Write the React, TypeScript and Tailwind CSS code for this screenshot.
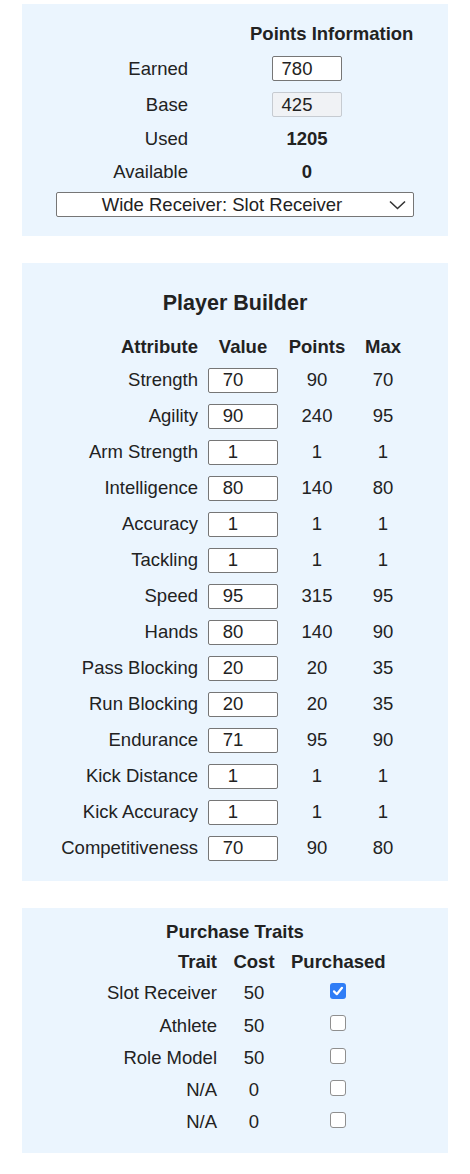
import React from "react";

const attributes = [
  { name: "Strength", value: "70", points: 90, max: 70 },
  { name: "Agility", value: "90", points: 240, max: 95 },
  { name: "Arm Strength", value: "1", points: 1, max: 1 },
  { name: "Intelligence", value: "80", points: 140, max: 80 },
  { name: "Accuracy", value: "1", points: 1, max: 1 },
  { name: "Tackling", value: "1", points: 1, max: 1 },
  { name: "Speed", value: "95", points: 315, max: 95 },
  { name: "Hands", value: "80", points: 140, max: 90 },
  { name: "Pass Blocking", value: "20", points: 20, max: 35 },
  { name: "Run Blocking", value: "20", points: 20, max: 35 },
  { name: "Endurance", value: "71", points: 95, max: 90 },
  { name: "Kick Distance", value: "1", points: 1, max: 1 },
  { name: "Kick Accuracy", value: "1", points: 1, max: 1 },
  { name: "Competitiveness", value: "70", points: 90, max: 80 },
];

const traits = [
  { name: "Slot Receiver", cost: 50, purchased: true },
  { name: "Athlete", cost: 50, purchased: false },
  { name: "Role Model", cost: 50, purchased: false },
  { name: "N/A", cost: 0, purchased: false },
  { name: "N/A", cost: 0, purchased: false },
];

function Checkbox({ checked }: { checked: boolean }) {
  if (checked) {
    return (
      <span className="mb-[4px] flex h-[16px] w-[16px] items-center justify-center rounded-[3px] bg-[#2f7df6]">
        <svg width="12" height="12" viewBox="0 0 12 12" fill="none">
          <path d="M2 6.4 L4.8 9.2 L10 2.8" stroke="#fff" strokeWidth="2.2" strokeLinecap="round" strokeLinejoin="round" />
        </svg>
      </span>
    );
  }
  return <span className="mb-[4px] block h-[16px] w-[16px] rounded-[3px] border-[1.5px] border-[#8f8f8f] bg-white" />;
}

export default function App() {
  return (
    <div className="min-h-[1174px] bg-white px-[22px] pt-[4px] font-['Liberation_Sans',Arial,sans-serif] text-[18.5px] text-[#222]">
      {/* points information */}
      <section className="bg-[#ebf5fe] pt-[18px] pb-[19px]">
        <div className="flex h-[24px] items-center pl-[228px] font-bold">Points Information</div>
        <div className="mt-[10px] flex h-[25px] items-center">
          <div className="w-[166px] text-right">Earned</div>
          <input
            readOnly
            value="780"
            className="ml-[84px] h-[25px] w-[70px] rounded-[2px] border border-[#767676] bg-white pl-[2px] pr-[22px] text-center text-[18.5px] text-[#222] outline-none"
          />
        </div>
        <div className="mt-[11px] flex h-[25px] items-center">
          <div className="w-[166px] text-right">Base</div>
          <input
            readOnly
            disabled
            value="425"
            className="ml-[84px] h-[25px] w-[70px] rounded-[2px] border border-[#c6cbd1] bg-[#f0f2f5] pl-[2px] pr-[22px] text-center text-[18.5px] text-[#222] outline-none"
          />
        </div>
        <div className="mt-[9px] flex h-[25px] items-center">
          <div className="w-[166px] text-right">Used</div>
          <div className="ml-[84px] w-[70px] text-center font-bold">1205</div>
        </div>
        <div className="mt-[8px] flex h-[25px] items-center">
          <div className="w-[166px] text-right">Available</div>
          <div className="ml-[84px] w-[70px] text-center font-bold">0</div>
        </div>
        <div className="mt-[8px] ml-[34px] flex h-[25px] w-[358px] items-center rounded-[2px] border border-[#767676] bg-white">
          <span className="flex-1 text-center">Wide Receiver: Slot Receiver</span>
          <svg className="ml-[2px] mr-[7px]" width="17" height="10" viewBox="0 0 17 10" fill="none">
            <path d="M1 1.5 L8.5 8.5 L16 1.5" stroke="#333" strokeWidth="1.6" />
          </svg>
        </div>
      </section>

      {/* player builder */}
      <section className="mt-[27px] bg-[#ebf5fe] pt-[25px] pb-[15px]">
        <h2 className="flex h-[30px] items-center justify-center text-[21.5px] font-bold">Player Builder</h2>
        <div className="mt-[14px] flex h-[30px] items-center font-bold">
          <div className="w-[176px] text-right">Attribute</div>
          <div className="ml-[10px] w-[70px] text-center">Value</div>
          <div className="w-[78px] text-center">Points</div>
          <div className="w-[54px] text-center">Max</div>
        </div>
        {attributes.map((a) => (
          <div key={a.name} className="flex h-[36px] items-center">
            <div className="w-[176px] text-right">{a.name}</div>
            <input
              readOnly
              value={a.value}
              className="ml-[10px] h-[25px] w-[70px] rounded-[2px] border border-[#767676] bg-white pl-[2px] pr-[22px] text-center text-[18.5px] text-[#222] outline-none"
            />
            <div className="w-[78px] text-center">{a.points}</div>
            <div className="w-[54px] text-center">{a.max}</div>
          </div>
        ))}
      </section>

      {/* purchase traits */}
      <section className="mt-[27px] bg-[#ebf5fe] pt-[12px] pb-[15px]">
        <h3 className="flex h-[24px] items-center justify-center font-bold">Purchase Traits</h3>
        <div className="mt-[2px] flex h-[31px] items-center font-bold">
          <div className="w-[195px] text-right">Trait</div>
          <div className="w-[74px] text-center">Cost</div>
          <div className="w-[94px] text-center">Purchased</div>
        </div>
        {traits.map((t, i) => (
          <div key={i} className="flex h-[32.25px] items-center">
            <div className="w-[195px] text-right">{t.name}</div>
            <div className="w-[74px] text-center">{t.cost}</div>
            <div className="flex w-[94px] justify-center">
              <Checkbox checked={t.purchased} />
            </div>
          </div>
        ))}
      </section>
    </div>
  );
}
